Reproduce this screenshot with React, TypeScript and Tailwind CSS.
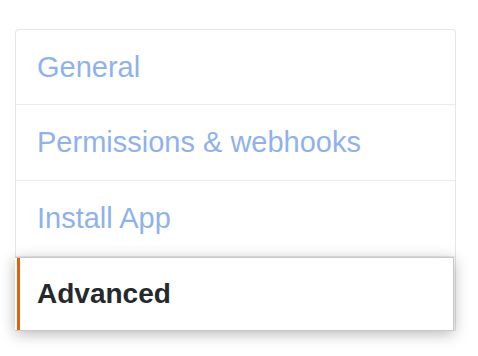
import React from 'react';

const items = [
  { label: 'General', h: 'h-[75px]' },
  { label: 'Permissions & webhooks', h: 'h-[76px]' },
  { label: 'Install App', h: 'h-[76px]' },
];

const App = () => {
  return (
    <div className="w-[478px] h-[356px] bg-white pt-[29px] pl-[15px] font-['Liberation_Sans',Arial,sans-serif]">
      <div className="w-[441px] rounded-t-[4px] border border-[#e4e6e9] border-b-0">
        {items.map(item => (
          <div
            key={item.label}
            className={`${item.h} flex items-center pl-[21px] border-b border-[#ececee] text-[29px] text-[#8fb2ec] leading-none`}
          >
            {item.label}
          </div>
        ))}
        <div className="relative -ml-px h-[74px] w-[439px] flex items-center border border-[#c8c8c8] border-l-0 bg-white shadow-[0_3px_14px_rgba(0,0,0,0.28)]">
          <div className="self-stretch w-[3px] ml-[2px] bg-[#e36209]" />
          <span className="pl-[17px] text-[28px] font-bold text-[#24292e] leading-none">Advanced</span>
        </div>
      </div>
    </div>
  );
};

export default App;
